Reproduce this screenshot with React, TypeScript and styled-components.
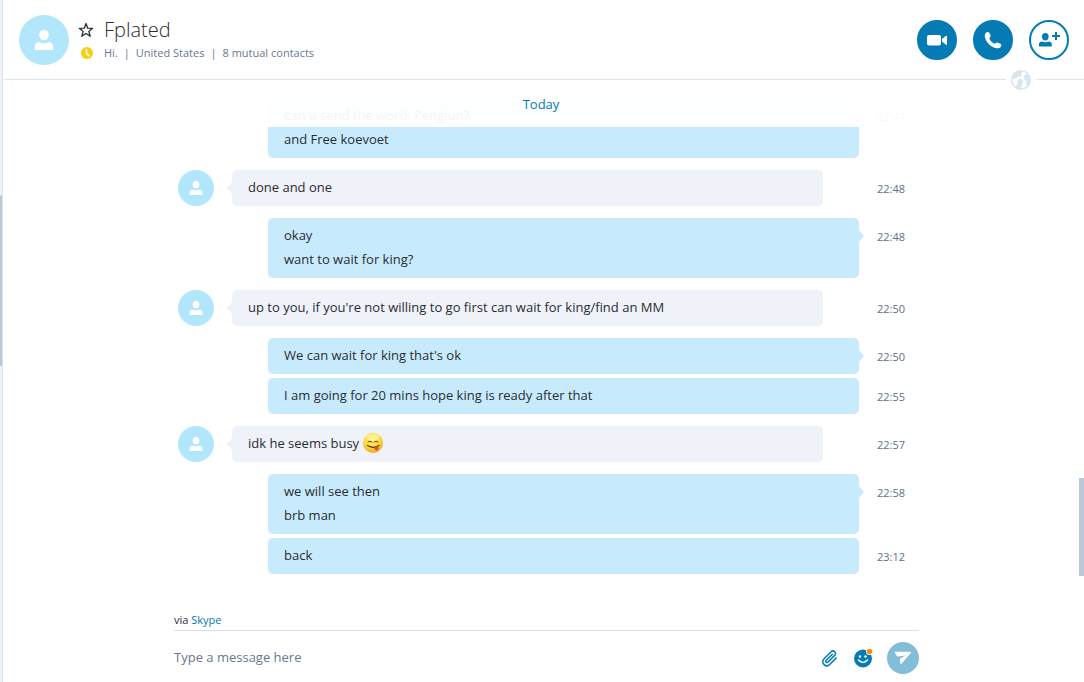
import React from "react";
import styled, { createGlobalStyle, css } from "styled-components";

const BLUE = "#057bb5";

const GlobalStyle = createGlobalStyle`
  *, *::before, *::after { box-sizing: border-box; }
  body {
    margin: 0;
    background: #fff;
    color: #2b2c33;
    font-family: "Open Sans", "Noto Sans", sans-serif;
    font-size: 12px;
  }
  button { font: inherit; cursor: pointer; }
  a { color: ${BLUE}; text-decoration: none; }
  svg { display: block; }
`;

const Page = styled.div`
  display: flex;
  height: 100vh;
`;

const SidebarEdge = styled.div`
  flex: none;
  width: 3px;
  padding-top: 195px;
  background: #eff3f8;
  border-right: 1px solid #dbe5f0;
`;

const SidebarThumb = styled.div`
  height: 171px;
  background: #b8cad9;
  border-top: 1px solid #d4dfe9;
`;

const Main = styled.main`
  flex: 1;
  min-width: 0;
  display: flex;
  flex-direction: column;
`;

const Header = styled.header`
  position: relative;
  flex: none;
  display: flex;
  align-items: center;
  height: 80px;
  margin-left: 1px;
  padding: 0 15px;
  border-bottom: 1px solid #dbe5ef;
`;

const Avatar = styled.div<{ $size: number }>`
  flex: none;
  display: grid;
  place-items: center;
  width: ${(p) => p.$size}px;
  height: ${(p) => p.$size}px;
  border-radius: 50%;
  background: #b2e6fb;
`;

const Contact = styled.div`
  flex: 1;
  display: grid;
  grid-template-columns: 16px 1fr;
  column-gap: 10px;
  align-items: center;
  margin-left: 9px;
  padding-bottom: 2px;
`;

const StarButton = styled.button`
  padding: 0;
  border: 0;
  background: none;
`;

const Name = styled.h1`
  margin: 0;
  color: #2b2c33;
  font-size: 20px;
  font-weight: 300;
  line-height: 28px;
`;

const Details = styled.p`
  display: flex;
  gap: 6px;
  margin: 0;
  color: #6b7790;
  font-size: 11px;
  line-height: 18px;
`;

const CallActions = styled.div`
  display: flex;
  gap: 16px;
`;

const RoundButton = styled.button<{ $outline?: boolean }>`
  display: grid;
  place-items: center;
  width: 40px;
  height: 40px;
  padding: 0;
  border: 2px solid ${BLUE};
  border-radius: 50%;
  background: ${(p) => (p.$outline ? "#fff" : BLUE)};
`;

const GlobeBadge = styled.div`
  position: absolute;
  right: 48px;
  bottom: -11px;
  padding: 0 5px;
  background: #fff;
  z-index: 2;
`;

const Conversation = styled.section`
  position: relative;
  flex: 1;
  min-height: 0;
  display: flex;
  flex-direction: column;
  justify-content: flex-end;
  overflow: hidden;
  padding: 0 165px 32px 175px;
`;

const DateBar = styled.div`
  position: absolute;
  top: 0;
  left: 0;
  right: 5px;
  height: 47px;
  background: rgba(255, 255, 255, 0.95);
  color: ${BLUE};
  font-size: 13px;
  line-height: 48px;
  text-align: center;
`;

const ScrollThumb = styled.div`
  position: absolute;
  right: 0;
  bottom: 30px;
  width: 5px;
  height: 98px;
  background: #b8cad9;
`;

const Row = styled.article<{ $follow?: boolean }>`
  flex: none;
  display: grid;
  grid-template-columns: 36px 18px 36px 1fr 36px 18px 42px;
  margin-top: ${(p) => (p.$follow ? 4 : 12)}px;
`;

const Bubble = styled.div<{ $mine?: boolean }>`
  position: relative;
  grid-row: 1;
  grid-column: ${(p) => (p.$mine ? "4 / 6" : "3 / 5")};
  padding: 5px 16px 7px;
  border-radius: 5px;
  background: ${(p) => (p.$mine ? "#c7ebfc" : "#eff2f8")};
  font-size: 13px;
  line-height: 24px;
`;

const Tail = styled.svg<{ $mine?: boolean }>`
  position: absolute;
  top: 10px;
  ${(p) =>
    p.$mine
      ? css`right: -5px;`
      : css`
          left: -5px;
          transform: scaleX(-1);
        `}
`;

const Line = styled.p`
  display: flex;
  align-items: center;
  gap: 4px;
  margin: 0;
`;

const Time = styled.time`
  grid-row: 1;
  grid-column: 7;
  padding-top: 9px;
  color: #5f6f86;
  font-size: 11px;
  line-height: 20px;
`;

const Composer = styled.footer`
  flex: none;
  padding: 6px 165px 0 171px;
`;

const Via = styled.p`
  margin: 0;
  padding-bottom: 2px;
  font-size: 11px;
  line-height: 16px;
`;

const InputRow = styled.form`
  display: flex;
  align-items: center;
  height: 52px;
  padding-top: 2px;
  border-top: 1px solid #d3e2ee;
`;

const MessageInput = styled.input`
  flex: 1;
  min-width: 0;
  padding: 0 0 2px;
  border: 0;
  outline: 0;
  background: none;
  font-family: inherit;
  font-size: 13px;
  line-height: 20px;
  &::placeholder { color: #6b7790; opacity: 1; }
`;

const ToolButton = styled.button`
  display: grid;
  place-items: center;
  width: 20px;
  height: 20px;
  margin-right: 14px;
  padding: 0;
  border: 0;
  background: none;
`;

const SendButton = styled.button`
  display: grid;
  place-items: center;
  width: 32px;
  height: 32px;
  padding: 0;
  border: 0;
  border-radius: 50%;
  background: #84bdda;
`;

const Person = ({ size }: { size: number }) => (
  <svg width={size} height={size} viewBox="0 0 20 20" fill="#fff" aria-hidden="true">
    <ellipse cx="10" cy="5" rx="4.8" ry="5.2" />
    <path d="M.8 20v-3.400C.8 13.600 3 12 5.500 12c1.500.9 3 1.200 4.500 1.200s3-.3 4.500-1.200c2.500 0 4.700 1.600 4.700 4.600V20z" />
  </svg>
);

const Star = () => (
  <svg width="16" height="16" viewBox="0 0 16 16" fill="none" stroke="#2b2c33" strokeWidth="1.300" strokeLinejoin="round">
    <path d="M8 1.500l1.700 4.700 5 .1-3.900 3.100 1.400 4.900L8 11.500l-4.200 2.800 1.400-4.900L1.300 6.300l5-.1z" />
  </svg>
);

const Away = () => (
  <svg width="16" height="16" viewBox="0 0 16 16" role="img" aria-label="Away">
    <circle cx="9" cy="8" r="6" fill="#fccd0c" />
    <path d="M8.500 4.500v4l2.300 2" fill="none" stroke="#fff" strokeWidth="1.700" strokeLinecap="round" />
  </svg>
);

const Video = () => (
  <svg width="22" height="16" viewBox="0 0 22 16" fill="#fff">
    <rect x="1" y="3" width="14" height="10.500" rx="2" />
    <path d="M16 7l4-3.200q1-.5 1 .5v8q0 1-1 .5L16 9.500z" />
  </svg>
);

const Phone = () => (
  <svg width="20" height="20" viewBox="0 0 20 20" fill="#fff">
    <path d="M3.200 2.400C4.400 1.500 5.600 1.800 6.400 3l1 2.100c.5 1 .2 1.700-.5 2.400-.6.600-.5 1.200-.1 1.900 1 1.700 2.200 2.900 3.900 3.900.7.400 1.300.5 1.900-.1.700-.7 1.400-1 2.400-.5l2.300 1.100c1.100.7 1.400 1.800.5 2.900-1.100 1.400-3 1.900-5 1.300C7.400 16.600 3.500 12.700 2 7.400c-.6-2-.2-3.900 1.200-5z" />
  </svg>
);

const AddPerson = () => (
  <svg width="22" height="16" viewBox="0 0 22 16" fill={BLUE}>
    <ellipse cx="7.300" cy="4.800" rx="3.300" ry="3.700" />
    <path d="M1 14.500v-2.200C1 10.400 2.300 9.500 4 9.500c1 .6 2.100.8 3.300.8s2.300-.2 3.300-.8c1.700 0 3.200.9 3.200 2.800v2.200z" />
    <path d="M17 0h2v3h3v2h-3v3h-2V5h-3V3h3z" />
  </svg>
);

const Globe = () => (
  <svg width="20" height="20" viewBox="0 0 20 20">
    <circle cx="10" cy="10" r="9.200" fill="#fff" stroke="#d8e4ee" strokeWidth="1.600" />
    <path d="M1.500 8C2 4 5.500 1 10 1l1.500 1.500-1.500 1L11 5 9.500 6.500H7L6 8l-2.500 1zM7 9.500l4-.5 1.500 2.500-1.500 2-.5 3L9 19l-3-.5L5 17l1-3zM13 6l3-2.500L19 8v5l-2.500 3.500L15 14l.5-3-2-1.500z" fill="#d8e4ee" />
  </svg>
);

const Yum = () => (
  <svg width="20" height="20" viewBox="0 0 20 20" role="img" aria-label="Cheeky smile">
    <defs>
      <radialGradient id="yum" cx=".45" cy=".35" r=".65">
        <stop offset="0" stopColor="#fff07a" />
        <stop offset=".6" stopColor="#fed93c" />
        <stop offset="1" stopColor="#f3a21c" />
      </radialGradient>
    </defs>
    <circle cx="10" cy="10" r="10" fill="url(#yum)" />
    <ellipse cx="10" cy="4.500" rx="6.500" ry="3.500" fill="#fff6ae" opacity=".6" />
    <path d="M5 9q2-2 4 0M11 9q2-2 4 0" fill="none" stroke="#654018" strokeWidth="1" strokeLinecap="round" />
    <path d="M4.500 12.500q6 3.600 11.500 0" fill="none" stroke="#5a3512" strokeWidth="1.200" strokeLinecap="round" />
    <path d="M11 14.500l3.800-1.300c.9 1.600.9 3.800-.4 4.300-1.500.3-2.900-1.200-3.400-3z" fill="#e8483c" />
  </svg>
);

const Clip = () => (
  <svg width="20" height="20" viewBox="0 0 24 24" fill="none" stroke={BLUE} strokeWidth="1.800" strokeLinecap="round">
    <g transform="rotate(3 12 12)">
      <path d="M15.500 7.500l-6.600 7.400c-1.400 1.700.7 3.600 2.200 2l7.500-8.400c2.700-3.300-1.700-7.200-4.700-3.900l-7.700 8.700c-4.300 5.200 2.800 11.300 7.300 6.200l7-7.800" />
    </g>
  </svg>
);

const Smile = () => (
  <svg width="20" height="20" viewBox="0 0 20 20">
    <circle cx="10" cy="10.500" r="9" fill={BLUE} />
    <circle cx="7" cy="8.500" r="1.200" fill="#fff" />
    <circle cx="12.500" cy="8.500" r="1.200" fill="#fff" />
    <path d="M5.500 12q4.500 4.800 9 0" fill="none" stroke="#fff" strokeWidth="1.500" strokeLinecap="round" />
    <circle cx="16.500" cy="3.500" r="3.500" fill="#fff" />
    <circle cx="16.500" cy="3.500" r="2.700" fill="#ff8c00" />
  </svg>
);

const Send = () => (
  <svg width="18" height="14" viewBox="0 0 18 14" fill="#fff">
    <path d="M.8 1.600Q.4.800 1.300.800h15.400q1 0 .3.900L7.500 12.800q-.8.700-1-.3L5.800 7.700 11.500 4.500 4 5.600q-1 0-1.300-.8z" />
  </svg>
);

type Message = { mine?: boolean; follow?: boolean; tail?: boolean; time: string; lines: string[]; emoji?: boolean };

const messages: Message[] = [
  { mine: true, tail: true, time: "22:47", lines: ["can u send the word: Pengïun?", "and Free koevoet"] },
  { tail: true, time: "22:48", lines: ["done and one"] },
  { mine: true, tail: true, time: "22:48", lines: ["okay", "want to wait for king?"] },
  { tail: true, time: "22:50", lines: ["up to you, if you're not willing to go first can wait for king/find an MM"] },
  { mine: true, tail: true, time: "22:50", lines: ["We can wait for king that's ok"] },
  { mine: true, follow: true, time: "22:55", lines: ["I am going for 20 mins hope king is ready after that"] },
  { tail: true, time: "22:57", lines: ["idk he seems busy"], emoji: true },
  { mine: true, tail: true, time: "22:58", lines: ["we will see then", "brb man"] },
  { mine: true, follow: true, time: "23:12", lines: ["back"] },
];

const MessageRow = ({ mine, follow, tail, time, lines, emoji }: Message) => (
  <Row $follow={follow}>
    {!mine && (
      <Avatar $size={36}>
        <Person size={14} />
      </Avatar>
    )}
    <Bubble $mine={mine}>
      {tail && (
        <Tail $mine={mine} width="5" height="16" viewBox="0 0 5 16" fill={mine ? "#c7ebfc" : "#eff2f8"}>
          <path d="M0 0c0 3 1.500 4 3.500 6q2.500 2 0 4C1.500 12 0 13 0 16z" />
        </Tail>
      )}
      {lines.map((text) => (
        <Line key={text}>
          {text}
          {emoji && <Yum />}
        </Line>
      ))}
    </Bubble>
    <Time>{time}</Time>
  </Row>
);

export default function App() {
  return (
    <Page>
      <GlobalStyle />
      <SidebarEdge>
        <SidebarThumb />
      </SidebarEdge>
      <Main>
        <Header>
          <Avatar $size={50}>
            <Person size={20} />
          </Avatar>
          <Contact>
            <StarButton aria-label="Add to favorites">
              <Star />
            </StarButton>
            <Name>Fplated</Name>
            <Away />
            <Details>
              <span>Hi.</span>
              <span>|</span>
              <span>United States</span>
              <span>|</span>
              <span>8 mutual contacts</span>
            </Details>
          </Contact>
          <CallActions>
            <RoundButton aria-label="Video call">
              <Video />
            </RoundButton>
            <RoundButton aria-label="Call">
              <Phone />
            </RoundButton>
            <RoundButton $outline aria-label="Add people">
              <AddPerson />
            </RoundButton>
          </CallActions>
          <GlobeBadge>
            <Globe />
          </GlobeBadge>
        </Header>
        <Conversation>
          {messages.map((m) => (
            <MessageRow key={m.time + m.lines[0]} {...m} />
          ))}
          <DateBar>Today</DateBar>
          <ScrollThumb />
        </Conversation>
        <Composer>
          <Via>
            via <a href="#skype">Skype</a>
          </Via>
          <InputRow>
            <MessageInput aria-label="Message" placeholder="Type a message here" />
            <ToolButton type="button" aria-label="Attach file">
              <Clip />
            </ToolButton>
            <ToolButton type="button" aria-label="Emoticons">
              <Smile />
            </ToolButton>
            <SendButton type="button" aria-label="Send">
              <Send />
            </SendButton>
          </InputRow>
        </Composer>
      </Main>
    </Page>
  );
}
